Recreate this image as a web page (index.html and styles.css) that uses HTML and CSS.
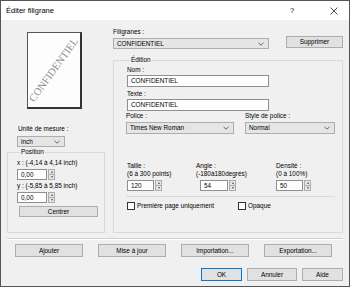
FILE: index.html
```html
<!DOCTYPE html>
<html lang="fr">
<head>
    <meta charset="UTF-8">
    <title>Éditer filigrane</title>
    <link rel="stylesheet" href="styles.css">
</head>
<body>
    <div class="window">
        <!-- barre de titre -->
        <div class="titlebar">
            <span class="title">Éditer filigrane</span>
            <span class="tb-btn help">?</span>
            <span class="tb-btn close">
                <svg width="8" height="8" viewBox="0 0 8 8"><path d="M0.5 0.5L7.5 7.5M7.5 0.5L0.5 7.5" stroke="#222" stroke-width="0.8"/></svg>
            </span>
        </div>

        <div class="body">
            <div class="main">
                <!-- colonne gauche -->
                <div class="left">
                    <div class="preview">
                        <div class="page"><span class="wm-text">CONFIDENTIEL</span></div>
                    </div>
                    <div class="lbl unit-lbl">Unité de mesure :</div>
                    <div class="combo unit">
                        <span>inch</span>
                        <svg class="chev" width="6" height="4" viewBox="0 0 6 4"><path d="M0.5 0.8L3 3.2L5.5 0.8" fill="none" stroke="#444" stroke-width="0.8"/></svg>
                    </div>
                    <fieldset class="group pos">
                        <legend>Position</legend>
                        <div class="lbl">x : (-4,14 à 4,14 inch)</div>
                        <div class="spin pos-spin">
                            <span class="edit">0,00</span>
                            <span class="arrows"><b class="up"></b><b class="down"></b></span>
                        </div>
                        <div class="lbl">y : (-5,85 à 5,85 inch)</div>
                        <div class="spin pos-spin">
                            <span class="edit">0,00</span>
                            <span class="arrows"><b class="up"></b><b class="down"></b></span>
                        </div>
                        <button class="btn centrer">Centrer</button>
                    </fieldset>
                </div>

                <!-- colonne droite -->
                <div class="right">
                    <div class="wm-row">
                        <div class="wm-field">
                            <div class="lbl">Filigranes :</div>
                            <div class="combo wm-combo">
                                <span>CONFIDENTIEL</span>
                                <svg class="chev" width="6" height="4" viewBox="0 0 6 4"><path d="M0.5 0.8L3 3.2L5.5 0.8" fill="none" stroke="#444" stroke-width="0.8"/></svg>
                            </div>
                        </div>
                        <button class="btn suppr">Supprimer</button>
                    </div>

                    <fieldset class="group edition">
                        <legend>Édition</legend>
                        <div class="lbl">Nom :</div>
                        <div class="edit wide">CONFIDENTIEL</div>
                        <div class="lbl gap3">Texte :</div>
                        <div class="edit wide">CONFIDENTIEL</div>

                        <div class="font-row">
                            <div class="font-col">
                                <div class="lbl">Police :</div>
                                <div class="combo police">
                                    <span>Times New Roman</span>
                                    <svg class="chev" width="6" height="4" viewBox="0 0 6 4"><path d="M0.5 0.8L3 3.2L5.5 0.8" fill="none" stroke="#444" stroke-width="0.8"/></svg>
                                </div>
                            </div>
                            <div class="font-col">
                                <div class="lbl">Style de police :</div>
                                <div class="combo style">
                                    <span>Normal</span>
                                    <svg class="chev" width="6" height="4" viewBox="0 0 6 4"><path d="M0.5 0.8L3 3.2L5.5 0.8" fill="none" stroke="#444" stroke-width="0.8"/></svg>
                                </div>
                            </div>
                        </div>

                        <div class="num-row">
                            <div class="num-col taille">
                                <div class="lbl">Taille :<br>(6 à 300 points)</div>
                                <div class="spin">
                                    <span class="edit">120</span>
                                    <span class="arrows"><b class="up"></b><b class="down"></b></span>
                                </div>
                            </div>
                            <div class="num-col angle">
                                <div class="lbl">Angle :<br>(-180à180degrés)</div>
                                <div class="spin">
                                    <span class="edit">54</span>
                                    <span class="arrows"><b class="up"></b><b class="down"></b></span>
                                </div>
                            </div>
                            <div class="num-col densite">
                                <div class="lbl">Densité :<br>(0 à 100%)</div>
                                <div class="spin">
                                    <span class="edit">50</span>
                                    <span class="arrows"><b class="up"></b><b class="down"></b></span>
                                </div>
                            </div>
                        </div>

                        <div class="inner-sep"></div>

                        <div class="check-row">
                            <label class="check first"><span class="box"></span>Première page uniquement</label>
                            <label class="check"><span class="box"></span>Opaque</label>
                        </div>
                    </fieldset>
                </div>
            </div>

            <div class="sep"></div>

            <div class="actions">
                <button class="btn act">Ajouter</button>
                <button class="btn act">Mise à jour</button>
                <button class="btn act">Importation...</button>
                <button class="btn act">Exportation...</button>
            </div>

            <div class="dialog-btns">
                <button class="btn ok">OK</button>
                <button class="btn annuler">Annuler</button>
                <button class="btn aide">Aide</button>
            </div>
        </div>
    </div>
</body>
</html>
```

FILE: styles.css
```css
/* fenêtre de dialogue */
* {
    box-sizing: border-box;
}

body {
    margin: 0;
    font-family: "Liberation Sans", Arial, sans-serif;
    font-size: 6.4px;
    line-height: 8px;
    color: #000;
}

.window {
    width: 350px;
    height: 287px;
    border: 1px solid #555;
    background-color: #f0f0f0;
    display: flex;
    flex-direction: column;
    overflow: hidden;
}

.titlebar {
    height: 19px;
    flex: none;
    background-color: #fff;
    display: flex;
    align-items: center;
    padding-left: 5px;
}

.title {
    font-size: 7.5px;
    flex: 1;
}

.tb-btn {
    width: 20px;
    display: flex;
    justify-content: center;
    font-size: 7.5px;
}

.help {
    margin-right: 22px;
}

.close {
    margin-right: 5px;
}

.body {
    flex: 1;
    min-height: 0;
    padding: 8px 6px 5px 6px;
    display: flex;
    flex-direction: column;
}

.main {
    flex: 1;
    min-height: 0;
    display: flex;
    gap: 8px;
}

.lbl {
    line-height: 8px;
    white-space: nowrap;
}

/* colonne gauche */
.left {
    width: 98px;
    display: flex;
    flex-direction: column;
}

.preview {
    padding-left: 20px;
    margin-top: 4px;
}

.page {
    width: 55px;
    height: 77px;
    background-color: #fdfdfd;
    border: 1px solid #555;
    border-right: 2px solid #333;
    border-bottom: 2px solid #333;
    display: flex;
    align-items: center;
    justify-content: center;
    overflow: hidden;
}

.wm-text {
    font-family: "Liberation Serif", "Times New Roman", serif;
    font-size: 10.5px;
    color: #8c8c8c;
    transform: rotate(-54deg);
    white-space: nowrap;
}

.unit-lbl {
    margin-top: 16px;
    padding-left: 11px;
}

.combo {
    height: 11px;
    background-color: #e5e5e5;
    border: 1px solid #adadad;
    display: flex;
    align-items: center;
    padding: 0 4px 0 3px;
}

.combo span {
    flex: 1;
}

.unit {
    width: 48px;
    margin: 3px 0 0 10px;
}

.group {
    margin: 0;
    padding: 0;
    min-width: 0;
    border: 1px solid #d9d9d9;
}

.group legend {
    margin-left: 3px;
    padding: 0 1px;
    line-height: 8px;
}

.pos {
    flex: 1;
    margin-top: 1px;
    padding-left: 9px;
}

.pos .lbl {
    margin-top: 2px;
}

.pos .lbl:first-of-type {
    margin-top: 3px;
}

.spin {
    display: flex;
    height: 11px;
    margin-top: 2px;
}

.edit {
    background-color: #fff;
    border: 1px solid #8f8f8f;
    padding-left: 3px;
    display: flex;
    align-items: center;
}

.spin .edit {
    width: 27px;
}

.pos-spin .edit {
    width: 30px;
}

.arrows {
    width: 7px;
    margin-left: 1px;
    display: flex;
    flex-direction: column;
    border: 1px solid #adadad;
    background-color: #e5e5e5;
}

.arrows b {
    flex: 1;
    display: flex;
    align-items: center;
    justify-content: center;
}

.arrows b::before {
    content: "";
    border-left: 1.5px solid transparent;
    border-right: 1.5px solid transparent;
}

.arrows .up {
    border-bottom: 1px solid #adadad;
}

.arrows .up::before {
    border-bottom: 2px solid #555;
}

.arrows .down::before {
    border-top: 2px solid #555;
}

.btn {
    height: 12px;
    padding: 0;
    background-color: #e1e1e1;
    border: 1px solid #adadad;
    font-family: inherit;
    font-size: 6.4px;
    line-height: 8px;
    color: #000;
}

.centrer {
    width: 79px;
    height: 11px;
    margin: 3px 0 0 2px;
}

/* colonne droite */
.right {
    width: 230px;
    display: flex;
    flex-direction: column;
}

.wm-row {
    display: flex;
    align-items: flex-start;
}

.wm-field {
    flex: 1;
}

.wm-combo {
    width: 156px;
    margin-top: 2px;
}

.suppr {
    width: 57px;
    margin-top: 8px;
}

.edition {
    flex: 1;
    margin-top: 7px;
    padding: 0 8px 0 13px;
}

.edition > .lbl {
    margin-top: 2px;
}

.edition > .gap3 {
    margin-top: 3px;
}

.wide {
    width: 142px;
    height: 12px;
    margin-top: 1px;
}

.font-row {
    display: flex;
    gap: 11px;
    margin-top: 1px;
    margin-left: -1px;
}

.police {
    width: 108px;
    height: 12px;
    margin-top: 2px;
}

.style {
    width: 90px;
    height: 12px;
    margin-top: 2px;
}

.num-row {
    display: flex;
    margin-top: 28px;
}

.taille {
    width: 69px;
}

.angle {
    width: 80px;
}

.angle .spin {
    margin-left: 4px;
}

.angle .edit {
    width: 28px;
}

.num-col .spin {
    height: 11px;
}

.inner-sep {
    height: 1px;
    margin: 5px 0 0 -1px;
    width: 209px;
    background-color: #d9d9d9;
}

.check-row {
    display: flex;
    margin-top: 5px;
}

.check {
    display: flex;
    align-items: center;
    gap: 2px;
}

.check.first {
    width: 111px;
}

.box {
    width: 8px;
    height: 8px;
    background-color: #fff;
    border: 1px solid #333;
}

/* bas de la fenêtre */
.sep {
    flex: none;
    margin-top: 5px;
    border-top: 1px solid #d0d0d0;
    border-bottom: 1px solid #fff;
}

.actions {
    flex: none;
    display: flex;
    gap: 15px;
    margin-top: 4px;
    padding-left: 8px;
}

.act {
    width: 68px;
    height: 13px;
}

.dialog-btns {
    flex: none;
    display: flex;
    justify-content: flex-end;
    gap: 5px;
    margin-top: 11px;
}

.dialog-btns .btn {
    height: 13px;
}

.ok {
    width: 41px;
    border-color: #0078d7;
}

.annuler {
    width: 50px;
}

.aide {
    width: 41px;
}
```
